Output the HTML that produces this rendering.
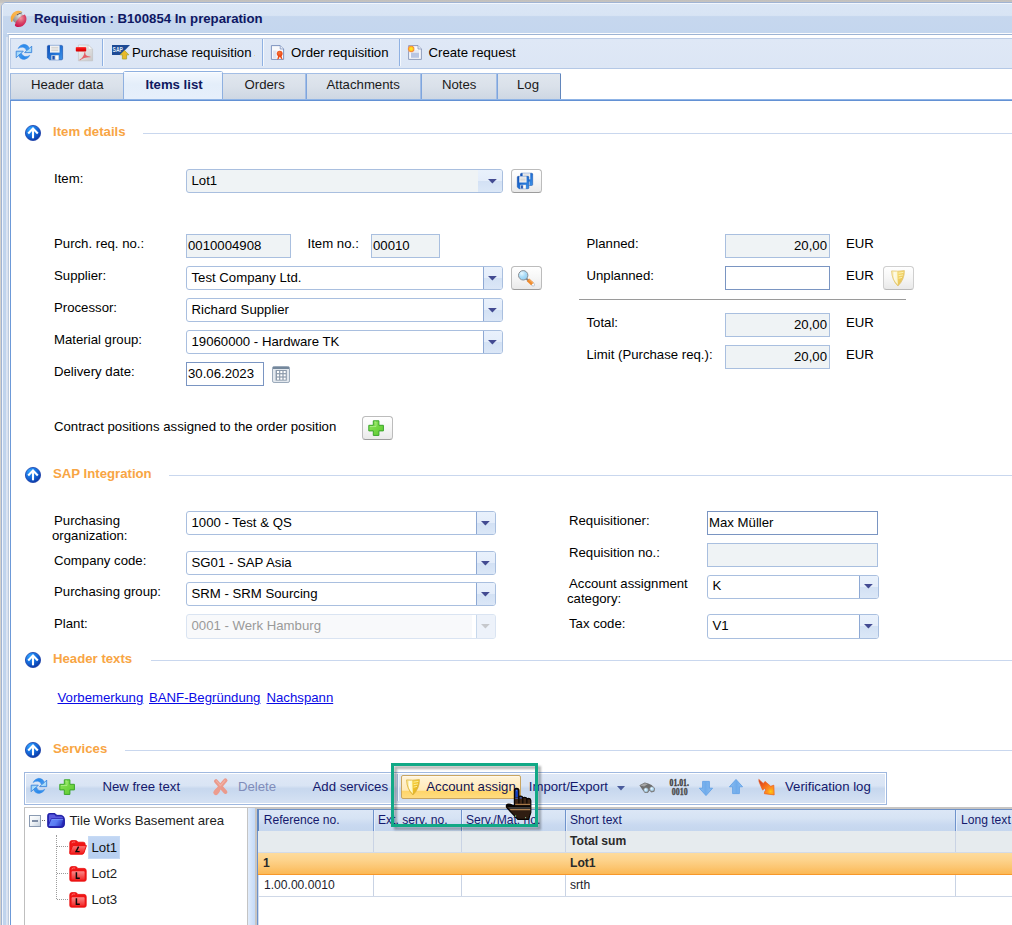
<!DOCTYPE html>
<html><head><meta charset="utf-8"><title>Requisition</title><style>
html,body{margin:0;padding:0;}
html{overflow:hidden;width:1012px;height:925px;}
body{width:1012px;height:925px;overflow:hidden;position:relative;background:#fff;font-family:"Liberation Sans",sans-serif;font-size:13.2px;color:#000;}
body div, body svg{position:absolute;}
.t{white-space:nowrap;color:#000;}
.lnk{color:#0a0ae6;text-decoration:underline;}
svg{display:block;overflow:visible}
</style></head><body>
<div style="left:0;top:0;width:1012px;height:925px;background:#d3d1cd"></div>
<div style="left:0;top:0;width:1012px;height:3px;background:linear-gradient(#c1bfbc,#c9c7c4)"></div>
<div style="left:1px;top:2px;width:1020px;height:930px;border:1px solid #9fb3d3;border-radius:5px 0 0 0;box-sizing:border-box;background:#c0d4ed;overflow:hidden"><div style="left:0;top:0;width:1020px;height:30px;background:linear-gradient(#dae6f5 0,#d8e4f4 38%,#c6d7ee 42%,#c4d6ee 100%);border-top:1px solid #f2f6fc;border-left:1px solid #eef3fb"></div><div style="left:0;top:31px;width:1px;height:900px;background:#f0f4fb"></div><div style="left:4px;top:34px;width:2px;height:900px;background:linear-gradient(90deg,#dde6f4,#d9e1ef)"></div></div>
<div style="left:10px;top:10px;width:17px;height:17px"><svg width="17" height="17" viewBox="0 0 17 17"><defs><linearGradient id="lg2" x1="0" y1="1" x2="1" y2="0"><stop offset="0" stop-color="#f7a22a"/><stop offset="0.6" stop-color="#fab650"/><stop offset="1" stop-color="#f5a63a"/></linearGradient><radialGradient id="lg3" cx="0.62" cy="0.3" r="0.7"><stop offset="0" stop-color="#e6e6e6"/><stop offset="0.45" stop-color="#b4b4b4"/><stop offset="1" stop-color="#8e8e8e"/></radialGradient><radialGradient id="lg4" cx="0.5" cy="0.3" r="0.75"><stop offset="0" stop-color="#ee9aa2"/><stop offset="0.5" stop-color="#d9486a"/><stop offset="1" stop-color="#cc0f4c"/></radialGradient></defs><circle cx="7.9" cy="7.8" r="5.7" fill="url(#lg3)"/><path d="M6.4 4.6 Q9.4 2.4 12.2 2.2 L12 3.2 Q9.4 3.6 7 5.4Z" fill="#3a3a3a" opacity=".75"/><path d="M1.2 11.7 Q-0.4 6.2 3.5 2.5 Q7.4 -0.8 12.3 1.9 Q7.2 2.8 4.5 6.8 Q2.8 9.4 2.3 11.7 Q1.7 12.2 1.2 11.7Z" fill="url(#lg2)"/><path d="M4.8 15 Q5.8 10.6 9.5 7.5 Q12.3 5.2 14.9 4.5 Q17.6 8.6 15.5 12.7 Q12.6 17.8 6.3 16.7 Q4.8 16.3 4.8 15Z" fill="url(#lg4)"/></svg></div>
<div class="t" style="left:34px;top:11.13px;font-size:13.2px;line-height:16px;font-weight:bold;color:#0f1763;">Requisition : B100854 In preparation</div>
<div class="" style="left:7px;top:33px;width:1010px;height:1px;background:#fbfcfe;"></div>
<div class="" style="left:8px;top:34px;width:1010px;height:900px;background:#fff;border:1px solid #bccadd;border-top-color:#9db4d4;box-sizing:border-box;"></div>
<div class="" style="left:10px;top:38px;width:1005px;height:31px;background:linear-gradient(#dfe8f6,#dce6f5);border:1px solid #bccce6;border-bottom-color:#b4c8e6;box-sizing:border-box;"></div>
<div style="left:15.9px;top:43.6px;width:16px;height:16px"><svg width="16" height="16" viewBox="0 0 16 16"><defs><linearGradient id="rg5" x1="0" y1="0" x2="1" y2="0.4"><stop offset="0" stop-color="#56a8f4"/><stop offset="0.5" stop-color="#2a88ea"/><stop offset="1" stop-color="#3f97ef"/></linearGradient><linearGradient id="rh6" x1="0" y1="0" x2="1" y2="1"><stop offset="0" stop-color="#7cc0f6"/><stop offset="0.6" stop-color="#aedffb"/><stop offset="1" stop-color="#8fcaf8"/></linearGradient></defs><path d="M2.0 4.6 Q3.4 1.2 7.6 0.35 Q11.8 0.3 13.4 4.3 L10.5 6.8 Q9.6 3.6 7.0 3.2 Q4.4 3.0 2.0 4.6Z" fill="url(#rg5)" stroke="#2d84e4" stroke-width="0.4"/><path d="M13.0 4.8 L15.7 2.1 L15.7 8.6 L8.6 8.6 L10.6 6.6Z" fill="url(#rh6)" stroke="#3b86dc" stroke-width="0.9" stroke-linejoin="round"/><g transform="rotate(180 7.95 7.9)"><path d="M2.0 4.6 Q3.4 1.2 7.6 0.35 Q11.8 0.3 13.4 4.3 L10.5 6.8 Q9.6 3.6 7.0 3.2 Q4.4 3.0 2.0 4.6Z" fill="url(#rg5)" stroke="#2d84e4" stroke-width="0.4"/><path d="M13.0 4.8 L15.7 2.1 L15.7 8.6 L8.6 8.6 L10.6 6.6Z" fill="url(#rh6)" stroke="#3b86dc" stroke-width="0.9" stroke-linejoin="round"/></g></svg></div>
<div style="left:46px;top:44px;width:17px;height:17px"><svg width="17" height="17" viewBox="0 0 17 17"><defs><linearGradient id="sg7" x1="0" y1="0" x2="1" y2="1"><stop offset="0" stop-color="#0e4db4"/><stop offset="0.55" stop-color="#2273d6"/><stop offset="1" stop-color="#3f93e8"/></linearGradient></defs><g transform="translate(1,1)"><path d="M1.6 0.4H14.4Q15.6 0.4 15.6 1.6V13.6Q15.6 14.8 14.4 14.8H2.6L0.4 12.8V1.6Q0.4 0.4 1.6 0.4Z" fill="url(#sg7)" stroke="#0f4aa8" stroke-width="0.6"/><rect x="3" y="0.4" width="9.6" height="7.2" fill="#f4f4f4"/><path d="M4.3 2.4H11.3M4.3 4H11.3M4.3 5.6H11.3" stroke="#c9c9c9" stroke-width="0.8"/><rect x="4.3" y="10.2" width="7.6" height="4.6" fill="#d6dbe2"/><rect x="5.4" y="10.9" width="2.3" height="3.6" fill="#1a4fb0"/><rect x="8.8" y="10.7" width="2.2" height="3.8" fill="#fdfdfd"/></g></svg></div>
<div style="left:75px;top:44px;width:18px;height:18px"><svg width="18" height="18" viewBox="0 0 18 18"><defs><linearGradient id="pg9" x1="0" y1="0" x2="1" y2="1"><stop offset="0" stop-color="#f6f6f6"/><stop offset="1" stop-color="#c9c9c9"/></linearGradient><linearGradient id="pr10" x1="0" y1="0" x2="0" y2="1"><stop offset="0" stop-color="#ff4a4a"/><stop offset="0.4" stop-color="#ee0a0a"/><stop offset="1" stop-color="#d40000"/></linearGradient></defs><path d="M3.4 1H13.2L17.6 5.2V16.8H3.4Z" fill="url(#pg9)" stroke="#bdbdbd" stroke-width="0.6"/><path d="M13.2 1V5.2H17.6Z" fill="#fbfbfb" stroke="#c4c4c4" stroke-width="0.5"/><path d="M4.8 15.6C7.6 14.2 9 11.6 9.4 8.6C9.5 7.6 10.4 7.7 10.3 8.8C10.1 11 11.6 12.6 15 12.4C15.9 12.4 15.8 13.3 14.9 13.3C11.2 13.1 7.6 14.2 5.2 16.2C4.5 16.7 4.1 16 4.8 15.6Z" fill="#e6525a" opacity=".9"/><rect x="0.8" y="3" width="10.4" height="4.5" rx="0.8" fill="url(#pr10)"/></svg></div>
<div class="" style="left:102px;top:39px;width:1px;height:27px;background:#8fb1e2;"></div>
<div class="" style="left:103px;top:39px;width:1px;height:27px;background:#f4f8fd;"></div>
<div style="left:111px;top:44px;width:19px;height:16px"><svg width="19" height="16" viewBox="0 0 19 16"><defs></defs><path d="M1 1H19L9.4 11H1Z" fill="#1d4a95"/><text x="1.6" y="7.6" font-family="Liberation Sans" font-weight="bold" font-size="6.6" fill="#dfe7f4" textLength="10.4" lengthAdjust="spacingAndGlyphs">SAP</text><path d="M13.5 6.4L17.9 10.8H15.6V15H11.4V10.8H9.1Z" fill="#e9b928" stroke="#a9a32c" stroke-width="0.8" stroke-linejoin="round"/></svg></div>
<div class="t" style="left:132px;top:45.33px;font-size:13.2px;line-height:16px;">Purchase requisition</div>
<div class="" style="left:253.6px;top:54.6px;width:1.6px;height:1.8px;background:#e9c46a;opacity:.8;border-radius:1px;"></div>
<div class="" style="left:262px;top:39px;width:1px;height:27px;background:#8fb1e2;"></div>
<div class="" style="left:263px;top:39px;width:1px;height:27px;background:#f4f8fd;"></div>
<div style="left:270px;top:44px;width:16px;height:17px"><svg width="16" height="17" viewBox="0 0 16 17"><defs><radialGradient id="og11" cx="0.45" cy="0.4" r="0.65"><stop offset="0" stop-color="#f77a3a"/><stop offset="1" stop-color="#e53a0e"/></radialGradient></defs><path d="M1.4 1.6H10.2L13.6 5V15.4H1.4Z" fill="#f8f9fc" stroke="#7289b9" stroke-width="0.9"/><path d="M10.2 1.6V5H13.6" fill="#e6ebf5" stroke="#7289b9" stroke-width="0.7"/><rect x="3" y="6.5" width="3.4" height="7.6" fill="#d9e0ef" opacity=".8"/><path d="M7.2 15.8L8.3 10.8H11.2L12.6 15.8L10.9 14.6L9.8 12.6L8.8 14.7Z" fill="#ee4a14"/><circle cx="9.7" cy="9.6" r="2.9" fill="url(#og11)"/></svg></div>
<div class="t" style="left:291px;top:45.33px;font-size:13.2px;line-height:16px;">Order requisition</div>
<div class="" style="left:399px;top:39px;width:1px;height:27px;background:#8fb1e2;"></div>
<div class="" style="left:400px;top:39px;width:1px;height:27px;background:#f4f8fd;"></div>
<div style="left:406.8px;top:44px;width:16px;height:17px"><svg width="16" height="17" viewBox="0 0 16 17"><defs><radialGradient id="cg12" cx="0.5" cy="0.5" r="0.5"><stop offset="0" stop-color="#fff02a"/><stop offset="0.45" stop-color="#ffd21e"/><stop offset="0.8" stop-color="#f58a3c"/><stop offset="1" stop-color="#f4a27a" stop-opacity=".6"/></radialGradient></defs><path d="M1.6 1.6H11L14.4 5V15.4H1.6Z" fill="#f6f7fb" stroke="#8493b4" stroke-width="0.9"/><path d="M11 1.6V5H14.4" fill="#e3e8f3" stroke="#8493b4" stroke-width="0.7"/><rect x="4" y="8.6" width="8" height="5.2" fill="#b9c6e3"/><rect x="4" y="6" width="8" height="2.2" fill="#e7ebf5"/><circle cx="4.2" cy="4.9" r="3.5" fill="url(#cg12)"/></svg></div>
<div class="t" style="left:428.5px;top:45.33px;font-size:13.2px;line-height:16px;">Create request</div>
<div class="" style="left:10px;top:73px;width:1005px;height:27px;background:#fff;"></div>
<div class="" style="left:10px;top:99px;width:1005px;height:1px;background:#8fb4e6;"></div>
<div class="" style="left:10px;top:100px;width:1005px;height:1px;background:#6391d4;"></div>
<div class="" style="left:10px;top:73px;width:114px;height:26px;box-sizing:border-box;border-top:1px solid #a3bee5;background:linear-gradient(#e0e6ee 0,#dae1ea 50%,#ced7e3 100%);"></div>
<div class="" style="left:10px;top:74px;width:1px;height:25px;background:#7ea5dd;"></div>
<div class="" style="left:123px;top:74px;width:1px;height:25px;background:#a2bde6;"></div>
<div class="" style="left:10px;top:74px;width:1px;height:25px;background:#9db6da;"></div>
<div class="" style="left:222px;top:73px;width:84px;height:26px;box-sizing:border-box;border-top:1px solid #a3bee5;background:linear-gradient(#e0e6ee 0,#dae1ea 50%,#ced7e3 100%);"></div>
<div class="" style="left:222px;top:74px;width:1px;height:25px;background:#7ea5dd;"></div>
<div class="" style="left:305px;top:74px;width:1px;height:25px;background:#a2bde6;"></div>
<div class="" style="left:306px;top:73px;width:115px;height:26px;box-sizing:border-box;border-top:1px solid #a3bee5;background:linear-gradient(#e0e6ee 0,#dae1ea 50%,#ced7e3 100%);"></div>
<div class="" style="left:306px;top:74px;width:1px;height:25px;background:#7ea5dd;"></div>
<div class="" style="left:420px;top:74px;width:1px;height:25px;background:#a2bde6;"></div>
<div class="" style="left:421px;top:73px;width:76px;height:26px;box-sizing:border-box;border-top:1px solid #a3bee5;background:linear-gradient(#e0e6ee 0,#dae1ea 50%,#ced7e3 100%);"></div>
<div class="" style="left:421px;top:74px;width:1px;height:25px;background:#7ea5dd;"></div>
<div class="" style="left:496px;top:74px;width:1px;height:25px;background:#a2bde6;"></div>
<div class="" style="left:497px;top:73px;width:64px;height:26px;box-sizing:border-box;border-top:1px solid #a3bee5;background:linear-gradient(#e0e6ee 0,#dae1ea 50%,#ced7e3 100%);"></div>
<div class="" style="left:497px;top:74px;width:1px;height:25px;background:#7ea5dd;"></div>
<div class="" style="left:560px;top:74px;width:1px;height:25px;background:#a2bde6;"></div>
<div class="" style="left:560px;top:74px;width:1px;height:25px;background:#6286bc;"></div>
<div class="" style="left:123px;top:71px;width:100px;height:28px;box-sizing:border-box;border:1px solid #8eb0e0;border-bottom:none;border-radius:3px 3px 0 0;background:linear-gradient(#f3f8fe 0,#e4eefa 45%,#e6effb 100%);"></div>
<div class="" style="left:124px;top:72px;width:98px;height:1px;background:#fbfdff;"></div>
<div class="t" style="left:31px;top:76.83px;font-size:13.2px;line-height:16px;color:#1a1a1a">Header data</div>
<div class="t" style="left:145.5px;top:76.83px;font-size:13.2px;line-height:16px;font-weight:bold;color:#10195f">Items list</div>
<div class="t" style="left:244.5px;top:76.83px;font-size:13.2px;line-height:16px;color:#1a1a1a">Orders</div>
<div class="t" style="left:326.5px;top:76.83px;font-size:13.2px;line-height:16px;color:#1a1a1a">Attachments</div>
<div class="t" style="left:442px;top:76.83px;font-size:13.2px;line-height:16px;color:#1a1a1a">Notes</div>
<div class="t" style="left:517px;top:76.83px;font-size:13.2px;line-height:16px;color:#1a1a1a">Log</div>
<div class="" style="left:10px;top:101px;width:1px;height:830px;background:#6c99d8;"></div>
<div style="left:25px;top:125px;width:16px;height:16px"><svg width="16" height="16" viewBox="0 0 16 16"><defs><radialGradient id="cg1" cx="0.3" cy="0.22" r="0.9"><stop offset="0" stop-color="#2da0ff"/><stop offset="0.55" stop-color="#1468d8"/><stop offset="1" stop-color="#0b2f9a"/></radialGradient></defs><circle cx="8" cy="8" r="7.6" fill="url(#cg1)" stroke="#1b3fa8" stroke-width="0.8"/><path d="M3.2 8.6L8 3.6L12.8 8.6" fill="none" stroke="#fff" stroke-width="2.1" stroke-linejoin="miter"/><path d="M8 5V13.3" stroke="#fff" stroke-width="2.1" fill="none"/></svg></div>
<div class="t" style="left:53px;top:124.33px;font-size:13.2px;line-height:16px;font-weight:bold;color:#f8a544;">Item details</div>
<div class="" style="left:143px;top:133px;width:869px;height:1px;background:#c9d7ee;"></div>
<div class="t" style="left:54px;top:171.33px;font-size:13.2px;line-height:16px;">Item:</div>
<div class="" style="left:186px;top:169px;width:317px;height:24px;background:#eff3f5;border:1px solid #a9bfdf;box-sizing:border-box;border-radius:3px;overflow:hidden;"><div style="position:absolute;right:0;top:0;width:24px;height:100%;background:linear-gradient(#e9f1fc 0,#e4edfa 49%,#d3e1f4 50%,#dbe7f7 100%);"></div><svg style="position:absolute;right:5.2px;top:8.8px" width="8.8" height="4.5" viewBox="0 0 8.8 4.5"><path d="M0 0H8.8L4.4 4.5Z" fill="#434b92"/></svg></div>
<div class="t" style="left:191.5px;top:171.8px;font-size:13.2px;line-height:17px;color:#000">Lot1</div>
<div class="" style="left:511px;top:169px;width:31px;height:24px;border:1px solid #bcbcbc;border-bottom-color:#9c9c9c;border-radius:3.5px;box-sizing:border-box;background:linear-gradient(#ffffff 0,#f6f6f6 50%,#e9e9e9 100%);"><div style="left:3.6px;top:1.7px;width:18px;height:18px"><svg width="18" height="18" viewBox="0 0 18 18"><defs><linearGradient id="sg8" x1="0" y1="0" x2="1" y2="1"><stop offset="0" stop-color="#0e4db4"/><stop offset="0.55" stop-color="#2273d6"/><stop offset="1" stop-color="#3f93e8"/></linearGradient></defs><g transform="translate(4.2,0.9) scale(0.8,0.85)"><path d="M1.6 0.4H14.4Q15.6 0.4 15.6 1.6V13.6Q15.6 14.8 14.4 14.8H2.6L0.4 12.8V1.6Q0.4 0.4 1.6 0.4Z" fill="url(#sg8)" stroke="#0f4aa8" stroke-width="0.6"/><rect x="3" y="0.4" width="9.6" height="7.2" fill="#f4f4f4"/><path d="M4.3 2.4H11.3M4.3 4H11.3M4.3 5.6H11.3" stroke="#c9c9c9" stroke-width="0.8"/><rect x="4.3" y="10.2" width="7.6" height="4.6" fill="#d6dbe2"/><rect x="5.4" y="10.9" width="2.3" height="3.6" fill="#1a4fb0"/><rect x="8.8" y="10.7" width="2.2" height="3.8" fill="#fdfdfd"/></g><g transform="translate(1,4) scale(0.76,0.86)"><path d="M1.6 0.4H14.4Q15.6 0.4 15.6 1.6V13.6Q15.6 14.8 14.4 14.8H2.6L0.4 12.8V1.6Q0.4 0.4 1.6 0.4Z" fill="url(#sg8)" stroke="#0f4aa8" stroke-width="0.6"/><rect x="3" y="0.4" width="9.6" height="7.2" fill="#f4f4f4"/><path d="M4.3 2.4H11.3M4.3 4H11.3M4.3 5.6H11.3" stroke="#c9c9c9" stroke-width="0.8"/><rect x="4.3" y="10.2" width="7.6" height="4.6" fill="#d6dbe2"/><rect x="5.4" y="10.9" width="2.3" height="3.6" fill="#1a4fb0"/><rect x="8.8" y="10.7" width="2.2" height="3.8" fill="#fdfdfd"/></g></svg></div></div>
<div class="t" style="left:54px;top:236.33px;font-size:13.2px;line-height:16px;">Purch. req. no.:</div>
<div class="" style="left:186px;top:234px;width:105px;height:24px;background:#eff3f5;border:1px solid #a9bfdf;box-sizing:border-box;"></div>
<div class="t" style="left:188px;top:236.9px;font-size:13.2px;line-height:17px;">0010004908</div>
<div class="t" style="left:307.5px;top:236.33px;font-size:13.2px;line-height:16px;">Item no.:</div>
<div class="" style="left:371px;top:234px;width:69px;height:24px;background:#eff3f5;border:1px solid #a9bfdf;box-sizing:border-box;"></div>
<div class="t" style="left:373px;top:236.9px;font-size:13.2px;line-height:17px;">00010</div>
<div class="t" style="left:54px;top:268.33px;font-size:13.2px;line-height:16px;">Supplier:</div>
<div class="" style="left:186px;top:266px;width:317px;height:24px;background:#fff;border:1px solid #a9bfdf;box-sizing:border-box;border-radius:3px;overflow:hidden;"><div style="position:absolute;right:0;top:0;width:18px;height:100%;background:linear-gradient(#e9f1fc 0,#e4edfa 49%,#d3e1f4 50%,#dbe7f7 100%);border-left:1px solid #8ea9d4;"></div><svg style="position:absolute;right:5.2px;top:8.8px" width="8.8" height="4.5" viewBox="0 0 8.8 4.5"><path d="M0 0H8.8L4.4 4.5Z" fill="#434b92"/></svg></div>
<div class="t" style="left:191.5px;top:268.8px;font-size:13.2px;line-height:17px;color:#000">Test Company Ltd.</div>
<div class="" style="left:511px;top:266px;width:31px;height:24px;border:1px solid #bcbcbc;border-bottom-color:#9c9c9c;border-radius:3.5px;box-sizing:border-box;background:linear-gradient(#ffffff 0,#f6f6f6 50%,#e9e9e9 100%);"><div style="left:-1px;top:-1px;width:31px;height:24px"><svg width="31" height="24" viewBox="0 0 31 24"><defs><radialGradient id="mg13" cx="0.35" cy="0.3" r="0.8"><stop offset="0" stop-color="#e9f8ff"/><stop offset="0.5" stop-color="#a9dcf8"/><stop offset="1" stop-color="#8fcdf3"/></radialGradient></defs><path d="M15.2 12.4L17.4 14.4" stroke="#7d8288" stroke-width="2" stroke-linecap="round"/><path d="M21 17.6L22.2 18.7" stroke="#c3cad4" stroke-width="3.6" stroke-linecap="round"/><path d="M21.6 18.2L22.2 18.7" stroke="#ffffff" stroke-width="1.6" stroke-linecap="round"/><path d="M17 13.9L21.4 17.9" stroke="#f08a2c" stroke-width="3.6" stroke-linecap="butt"/><path d="M17.8 13.4L22 17.2" stroke="#f8b56a" stroke-width="1"/><circle cx="12.2" cy="9.3" r="4.7" fill="url(#mg13)" stroke="#8b8f94" stroke-width="1"/></svg></div></div>
<div class="t" style="left:54px;top:300.33px;font-size:13.2px;line-height:16px;">Processor:</div>
<div class="" style="left:186px;top:298px;width:317px;height:24px;background:#fff;border:1px solid #a9bfdf;box-sizing:border-box;border-radius:3px;overflow:hidden;"><div style="position:absolute;right:0;top:0;width:18px;height:100%;background:linear-gradient(#e9f1fc 0,#e4edfa 49%,#d3e1f4 50%,#dbe7f7 100%);border-left:1px solid #8ea9d4;"></div><svg style="position:absolute;right:5.2px;top:8.8px" width="8.8" height="4.5" viewBox="0 0 8.8 4.5"><path d="M0 0H8.8L4.4 4.5Z" fill="#434b92"/></svg></div>
<div class="t" style="left:191.5px;top:300.8px;font-size:13.2px;line-height:17px;color:#000">Richard Supplier</div>
<div class="t" style="left:54px;top:332.33px;font-size:13.2px;line-height:16px;">Material group:</div>
<div class="" style="left:186px;top:330px;width:317px;height:24px;background:#fff;border:1px solid #a9bfdf;box-sizing:border-box;border-radius:3px;overflow:hidden;"><div style="position:absolute;right:0;top:0;width:18px;height:100%;background:linear-gradient(#e9f1fc 0,#e4edfa 49%,#d3e1f4 50%,#dbe7f7 100%);border-left:1px solid #8ea9d4;"></div><svg style="position:absolute;right:5.2px;top:8.8px" width="8.8" height="4.5" viewBox="0 0 8.8 4.5"><path d="M0 0H8.8L4.4 4.5Z" fill="#434b92"/></svg></div>
<div class="t" style="left:191.5px;top:332.8px;font-size:13.2px;line-height:17px;color:#000">19060000 - Hardware TK</div>
<div class="t" style="left:54px;top:364.33px;font-size:13.2px;line-height:16px;">Delivery date:</div>
<div class="" style="left:186px;top:362px;width:78px;height:24px;background:#fff;border:1px solid #7a95c2;box-sizing:border-box;"></div>
<div class="t" style="left:188px;top:364.9px;font-size:13.2px;line-height:17px;">30.06.2023</div>
<div style="left:272px;top:366px;width:18px;height:17px"><svg width="18" height="17" viewBox="0 0 18 17"><defs></defs><rect x="0.5" y="0.5" width="17" height="16" rx="1.6" fill="#e3e8ee" stroke="#9aa9ba" stroke-width="1"/><rect x="1" y="1" width="16" height="2" fill="#74879b"/><rect x="3.6" y="4" width="11.2" height="10.6" fill="#8c9aab"/><rect x="5.0" y="5.0" width="2.1" height="2.1" fill="#fff"/><rect x="5.0" y="8.3" width="2.1" height="2.1" fill="#fff"/><rect x="5.0" y="11.6" width="2.1" height="2.1" fill="#fff"/><rect x="8.3" y="5.0" width="2.1" height="2.1" fill="#fff"/><rect x="8.3" y="8.3" width="2.1" height="2.1" fill="#fff"/><rect x="8.3" y="11.6" width="2.1" height="2.1" fill="#fff"/><rect x="11.6" y="5.0" width="2.1" height="2.1" fill="#fff"/><rect x="11.6" y="8.3" width="2.1" height="2.1" fill="#fff"/><rect x="11.6" y="11.6" width="2.1" height="2.1" fill="#fff"/></svg></div>
<div class="t" style="left:54px;top:419.33px;font-size:13.2px;line-height:16px;">Contract positions assigned to the order position</div>
<div class="" style="left:362px;top:416px;width:31px;height:24px;border:1px solid #bcbcbc;border-bottom-color:#9c9c9c;border-radius:3.5px;box-sizing:border-box;background:linear-gradient(#ffffff 0,#f6f6f6 50%,#e9e9e9 100%);"><div style="left:4.7px;top:2.7px;width:17px;height:17px"><svg width="17" height="17" viewBox="0 0 17 17"><defs><linearGradient id="pl14" x1="0" y1="0" x2="1" y2="1"><stop offset="0" stop-color="#92e665"/><stop offset="0.5" stop-color="#74d743"/><stop offset="1" stop-color="#5cc832"/></linearGradient></defs><path d="M5.3 0.8H10.9V5.3H15.4V10.9H10.9V15.4H5.3V10.9H0.8V5.3H5.3Z" fill="url(#pl14)" stroke="#3aa52a" stroke-width="1" stroke-linejoin="round"/><path d="M6.5 2H8V6.5H2" fill="none" stroke="#b5f08f" stroke-width="0.9" opacity=".8"/></svg></div></div>
<div class="t" style="left:586.5px;top:236.33px;font-size:13.2px;line-height:16px;">Planned:</div>
<div class="" style="left:725px;top:234px;width:105px;height:24px;background:#eff3f5;border:1px solid #a9bfdf;box-sizing:border-box;"></div>
<div class="t" style="left:725px;width:102px;text-align:right;top:236.9px;font-size:13.2px;line-height:17px;">20,00</div>
<div class="t" style="left:846px;top:236.33px;font-size:13.2px;line-height:16px;">EUR</div>
<div class="t" style="left:586.5px;top:268.33px;font-size:13.2px;line-height:16px;">Unplanned:</div>
<div class="" style="left:725px;top:266px;width:105px;height:24px;background:#fff;border:1px solid #7a95c2;box-sizing:border-box;"></div>
<div class="t" style="left:846px;top:268.33px;font-size:13.2px;line-height:16px;">EUR</div>
<div class="" style="left:883px;top:266px;width:31px;height:24px;border:1px solid #cfcfcf;border-bottom-color:#b9b9b9;border-radius:3.5px;box-sizing:border-box;background:linear-gradient(#ffffff 0,#f6f6f6 50%,#e9e9e9 100%);"><div style="left:6.5px;top:3.3px;width:16px;height:17px;opacity:.72"><svg width="16" height="17" viewBox="0 0 16 17"><defs><linearGradient id="sh15" x1="0" y1="0" x2="1" y2="0"><stop offset="0" stop-color="#f6df86"/><stop offset="0.4" stop-color="#fffbe0"/><stop offset="1" stop-color="#fff6b8"/></linearGradient><linearGradient id="sh16" x1="0" y1="0" x2="1" y2="1"><stop offset="0" stop-color="#f8e27a"/><stop offset="0.45" stop-color="#f2c832"/><stop offset="1" stop-color="#d9a214"/></linearGradient></defs><path d="M0.6 0.9Q6.6 1.6 13.4 0.6Q13.6 9.5 6.9 16Q0.8 10 0.6 0.9Z" fill="url(#sh16)" stroke="#d9b344" stroke-width="0.8"/><path d="M1.2 1.5Q4 1.8 6.2 1.6L6.9 15Q1.6 9.6 1.2 1.5Z" fill="url(#sh15)"/><path d="M7.6 3.2L12.4 2.4M7.6 5.7L12 4.9M7.6 8.2L11 7.4" stroke="#fff1a0" stroke-width="1" opacity=".9"/></svg></div></div>
<div class="" style="left:579px;top:299px;width:327px;height:1px;background:#9a9a9a;"></div>
<div class="t" style="left:586.5px;top:315.33px;font-size:13.2px;line-height:16px;">Total:</div>
<div class="" style="left:725px;top:313px;width:105px;height:24px;background:#eff3f5;border:1px solid #a9bfdf;box-sizing:border-box;"></div>
<div class="t" style="left:725px;width:102px;text-align:right;top:315.9px;font-size:13.2px;line-height:17px;">20,00</div>
<div class="t" style="left:846px;top:315.33px;font-size:13.2px;line-height:16px;">EUR</div>
<div class="t" style="left:586.5px;top:347.33px;font-size:13.2px;line-height:16px;">Limit (Purchase req.):</div>
<div class="" style="left:725px;top:345px;width:105px;height:24px;background:#eff3f5;border:1px solid #a9bfdf;box-sizing:border-box;"></div>
<div class="t" style="left:725px;width:102px;text-align:right;top:347.9px;font-size:13.2px;line-height:17px;">20,00</div>
<div class="t" style="left:846px;top:347.33px;font-size:13.2px;line-height:16px;">EUR</div>
<div style="left:25px;top:467px;width:16px;height:16px"><svg width="16" height="16" viewBox="0 0 16 16"><defs><radialGradient id="cg1" cx="0.3" cy="0.22" r="0.9"><stop offset="0" stop-color="#2da0ff"/><stop offset="0.55" stop-color="#1468d8"/><stop offset="1" stop-color="#0b2f9a"/></radialGradient></defs><circle cx="8" cy="8" r="7.6" fill="url(#cg1)" stroke="#1b3fa8" stroke-width="0.8"/><path d="M3.2 8.6L8 3.6L12.8 8.6" fill="none" stroke="#fff" stroke-width="2.1" stroke-linejoin="miter"/><path d="M8 5V13.3" stroke="#fff" stroke-width="2.1" fill="none"/></svg></div>
<div class="t" style="left:53px;top:466.33px;font-size:13.2px;line-height:16px;font-weight:bold;color:#f8a544;">SAP Integration</div>
<div class="" style="left:169px;top:475px;width:843px;height:1px;background:#c9d7ee;"></div>
<div class="t" style="left:54px;top:513.33px;font-size:13.2px;line-height:16px;">Purchasing</div>
<div class="t" style="left:52px;top:528.33px;font-size:13.2px;line-height:16px;">organization:</div>
<div class="" style="left:186px;top:511px;width:310px;height:24px;background:#fff;border:1px solid #a9bfdf;box-sizing:border-box;border-radius:3px;overflow:hidden;"><div style="position:absolute;right:0;top:0;width:18px;height:100%;background:linear-gradient(#e9f1fc 0,#e4edfa 49%,#d3e1f4 50%,#dbe7f7 100%);border-left:1px solid #8ea9d4;"></div><svg style="position:absolute;right:5.2px;top:8.8px" width="8.8" height="4.5" viewBox="0 0 8.8 4.5"><path d="M0 0H8.8L4.4 4.5Z" fill="#434b92"/></svg></div>
<div class="t" style="left:191.5px;top:513.8px;font-size:13.2px;line-height:17px;color:#000">1000 - Test &amp; QS</div>
<div class="t" style="left:54px;top:553.33px;font-size:13.2px;line-height:16px;">Company code:</div>
<div class="" style="left:186px;top:551px;width:310px;height:24px;background:#fff;border:1px solid #a9bfdf;box-sizing:border-box;border-radius:3px;overflow:hidden;"><div style="position:absolute;right:0;top:0;width:18px;height:100%;background:linear-gradient(#e9f1fc 0,#e4edfa 49%,#d3e1f4 50%,#dbe7f7 100%);border-left:1px solid #8ea9d4;"></div><svg style="position:absolute;right:5.2px;top:8.8px" width="8.8" height="4.5" viewBox="0 0 8.8 4.5"><path d="M0 0H8.8L4.4 4.5Z" fill="#434b92"/></svg></div>
<div class="t" style="left:191.5px;top:553.8px;font-size:13.2px;line-height:17px;color:#000">SG01 - SAP Asia</div>
<div class="t" style="left:54px;top:584.33px;font-size:13.2px;line-height:16px;">Purchasing group:</div>
<div class="" style="left:186px;top:582.3px;width:310px;height:24px;background:#fff;border:1px solid #a9bfdf;box-sizing:border-box;border-radius:3px;overflow:hidden;"><div style="position:absolute;right:0;top:0;width:18px;height:100%;background:linear-gradient(#e9f1fc 0,#e4edfa 49%,#d3e1f4 50%,#dbe7f7 100%);border-left:1px solid #8ea9d4;"></div><svg style="position:absolute;right:5.2px;top:8.8px" width="8.8" height="4.5" viewBox="0 0 8.8 4.5"><path d="M0 0H8.8L4.4 4.5Z" fill="#434b92"/></svg></div>
<div class="t" style="left:191.5px;top:585.0999999999999px;font-size:13.2px;line-height:17px;color:#000">SRM - SRM Sourcing</div>
<div class="t" style="left:54px;top:615.83px;font-size:13.2px;line-height:16px;">Plant:</div>
<div class="" style="left:186px;top:614px;width:310px;height:24.5px;background:#f8f9fb;border:1px solid #dae4f2;box-sizing:border-box;border-radius:3px;overflow:hidden;"><div style="position:absolute;right:19px;top:0;width:4px;height:100%;background:#fff"></div><div style="position:absolute;right:0;top:0;width:18px;height:100%;background:#edf2fa;border-left:1px solid #c7d8ec;"></div><svg style="position:absolute;right:5.2px;top:9.05px" width="8.8" height="4.5" viewBox="0 0 8.8 4.5"><path d="M0 0H8.8L4.4 4.5Z" fill="#c6c8cc"/></svg></div>
<div class="t" style="left:191.5px;top:616.8px;font-size:13.2px;line-height:17px;color:#9a9a9a">0001 - Werk Hamburg</div>
<div class="t" style="left:569px;top:513.33px;font-size:13.2px;line-height:16px;">Requisitioner:</div>
<div class="" style="left:707px;top:511px;width:171px;height:24px;background:#fff;border:1px solid #7a95c2;box-sizing:border-box;"></div>
<div class="t" style="left:709px;top:513.9px;font-size:13.2px;line-height:17px;">Max Müller</div>
<div class="t" style="left:569px;top:545.33px;font-size:13.2px;line-height:16px;">Requisition no.:</div>
<div class="" style="left:707px;top:543px;width:171px;height:24px;background:#eff3f5;border:1px solid #a9bfdf;box-sizing:border-box;"></div>
<div class="t" style="left:569px;top:576.33px;font-size:13.2px;line-height:16px;">Account assignment</div>
<div class="t" style="left:567px;top:591.33px;font-size:13.2px;line-height:16px;">category:</div>
<div class="" style="left:707px;top:574.5px;width:172px;height:24px;background:#fff;border:1px solid #a9bfdf;box-sizing:border-box;border-radius:3px;overflow:hidden;"><div style="position:absolute;right:0;top:0;width:18px;height:100%;background:linear-gradient(#e9f1fc 0,#e4edfa 49%,#d3e1f4 50%,#dbe7f7 100%);border-left:1px solid #8ea9d4;"></div><svg style="position:absolute;right:5.2px;top:8.8px" width="8.8" height="4.5" viewBox="0 0 8.8 4.5"><path d="M0 0H8.8L4.4 4.5Z" fill="#434b92"/></svg></div>
<div class="t" style="left:712.5px;top:577.3px;font-size:13.2px;line-height:17px;color:#000">K</div>
<div class="t" style="left:569px;top:616.33px;font-size:13.2px;line-height:16px;">Tax code:</div>
<div class="" style="left:707px;top:614px;width:172px;height:24.5px;background:#fff;border:1px solid #a9bfdf;box-sizing:border-box;border-radius:3px;overflow:hidden;"><div style="position:absolute;right:0;top:0;width:18px;height:100%;background:linear-gradient(#e9f1fc 0,#e4edfa 49%,#d3e1f4 50%,#dbe7f7 100%);border-left:1px solid #8ea9d4;"></div><svg style="position:absolute;right:5.2px;top:9.05px" width="8.8" height="4.5" viewBox="0 0 8.8 4.5"><path d="M0 0H8.8L4.4 4.5Z" fill="#434b92"/></svg></div>
<div class="t" style="left:712.5px;top:616.8px;font-size:13.2px;line-height:17px;color:#000">V1</div>
<div style="left:25px;top:652px;width:16px;height:16px"><svg width="16" height="16" viewBox="0 0 16 16"><defs><radialGradient id="cg1" cx="0.3" cy="0.22" r="0.9"><stop offset="0" stop-color="#2da0ff"/><stop offset="0.55" stop-color="#1468d8"/><stop offset="1" stop-color="#0b2f9a"/></radialGradient></defs><circle cx="8" cy="8" r="7.6" fill="url(#cg1)" stroke="#1b3fa8" stroke-width="0.8"/><path d="M3.2 8.6L8 3.6L12.8 8.6" fill="none" stroke="#fff" stroke-width="2.1" stroke-linejoin="miter"/><path d="M8 5V13.3" stroke="#fff" stroke-width="2.1" fill="none"/></svg></div>
<div class="t" style="left:53px;top:651.33px;font-size:13.2px;line-height:16px;font-weight:bold;color:#f8a544;">Header texts</div>
<div class="" style="left:151px;top:660px;width:861px;height:1px;background:#c9d7ee;"></div>
<div class="t" style="left:57.5px;top:690.33px;font-size:13.2px;line-height:16px;"><span class="lnk">Vorbemerkung</span></div>
<div class="t" style="left:149px;top:690.33px;font-size:13.2px;line-height:16px;"><span class="lnk">BANF-Begründung</span></div>
<div class="t" style="left:266.5px;top:690.33px;font-size:13.2px;line-height:16px;"><span class="lnk">Nachspann</span></div>
<div style="left:25px;top:742px;width:16px;height:16px"><svg width="16" height="16" viewBox="0 0 16 16"><defs><radialGradient id="cg1" cx="0.3" cy="0.22" r="0.9"><stop offset="0" stop-color="#2da0ff"/><stop offset="0.55" stop-color="#1468d8"/><stop offset="1" stop-color="#0b2f9a"/></radialGradient></defs><circle cx="8" cy="8" r="7.6" fill="url(#cg1)" stroke="#1b3fa8" stroke-width="0.8"/><path d="M3.2 8.6L8 3.6L12.8 8.6" fill="none" stroke="#fff" stroke-width="2.1" stroke-linejoin="miter"/><path d="M8 5V13.3" stroke="#fff" stroke-width="2.1" fill="none"/></svg></div>
<div class="t" style="left:53px;top:741.33px;font-size:13.2px;line-height:16px;font-weight:bold;color:#f8a544;">Services</div>
<div class="" style="left:125px;top:750px;width:887px;height:1px;background:#c9d7ee;"></div>
<div class="" style="left:24px;top:772px;width:863px;height:33px;box-sizing:border-box;border:1px solid #9fb8df;background:#fff;"></div>
<div class="" style="left:26px;top:774px;width:859px;height:29px;background:linear-gradient(#dfe8f6 0,#d9e4f4 40%,#c8d8ee 50%,#c9d9ef 60%,#d6e2f3 100%);"></div>
<div style="left:31px;top:777.8px;width:16px;height:16px"><svg width="16" height="16" viewBox="0 0 16 16"><defs><linearGradient id="rg5" x1="0" y1="0" x2="1" y2="0.4"><stop offset="0" stop-color="#56a8f4"/><stop offset="0.5" stop-color="#2a88ea"/><stop offset="1" stop-color="#3f97ef"/></linearGradient><linearGradient id="rh6" x1="0" y1="0" x2="1" y2="1"><stop offset="0" stop-color="#7cc0f6"/><stop offset="0.6" stop-color="#aedffb"/><stop offset="1" stop-color="#8fcaf8"/></linearGradient></defs><path d="M2.0 4.6 Q3.4 1.2 7.6 0.35 Q11.8 0.3 13.4 4.3 L10.5 6.8 Q9.6 3.6 7.0 3.2 Q4.4 3.0 2.0 4.6Z" fill="url(#rg5)" stroke="#2d84e4" stroke-width="0.4"/><path d="M13.0 4.8 L15.7 2.1 L15.7 8.6 L8.6 8.6 L10.6 6.6Z" fill="url(#rh6)" stroke="#3b86dc" stroke-width="0.9" stroke-linejoin="round"/><g transform="rotate(180 7.95 7.9)"><path d="M2.0 4.6 Q3.4 1.2 7.6 0.35 Q11.8 0.3 13.4 4.3 L10.5 6.8 Q9.6 3.6 7.0 3.2 Q4.4 3.0 2.0 4.6Z" fill="url(#rg5)" stroke="#2d84e4" stroke-width="0.4"/><path d="M13.0 4.8 L15.7 2.1 L15.7 8.6 L8.6 8.6 L10.6 6.6Z" fill="url(#rh6)" stroke="#3b86dc" stroke-width="0.9" stroke-linejoin="round"/></g></svg></div>
<div style="left:59.4px;top:778.7px;width:17px;height:17px"><svg width="17" height="17" viewBox="0 0 17 17"><defs><linearGradient id="pl14" x1="0" y1="0" x2="1" y2="1"><stop offset="0" stop-color="#92e665"/><stop offset="0.5" stop-color="#74d743"/><stop offset="1" stop-color="#5cc832"/></linearGradient></defs><path d="M5.3 0.8H10.9V5.3H15.4V10.9H10.9V15.4H5.3V10.9H0.8V5.3H5.3Z" fill="url(#pl14)" stroke="#3aa52a" stroke-width="1" stroke-linejoin="round"/><path d="M6.5 2H8V6.5H2" fill="none" stroke="#b5f08f" stroke-width="0.9" opacity=".8"/></svg></div>
<div class="t" style="left:102.4px;top:779.33px;font-size:13.2px;line-height:16px;color:#14186c">New free text</div>
<div style="left:212.6px;top:778.4px;width:17px;height:17px"><svg width="17" height="17" viewBox="0 0 17 17"><defs></defs><path d="M3 3.2L12.4 14" stroke="#ea9a8c" stroke-width="4" stroke-linecap="round" fill="none"/><path d="M12.4 2.4Q8 7 3.4 14" stroke="#ec9c8e" stroke-width="4.2" stroke-linecap="round" fill="none"/><path d="M4.4 12.6L2.8 14.6" stroke="#ec9c8e" stroke-width="5" stroke-linecap="round" fill="none"/><path d="M3.4 3L7.4 7.6L11.8 2.6" fill="none" stroke="#f4b6aa" stroke-width="1.1" stroke-linecap="round" opacity=".8"/></svg></div>
<div class="t" style="left:238px;top:779.33px;font-size:13.2px;line-height:16px;color:#7f8cba">Delete</div>
<div class="t" style="left:312.5px;top:779.33px;font-size:13.2px;line-height:16px;color:#14186c">Add services</div>
<div class="" style="left:397px;top:774px;width:1px;height:27px;background:#a9c0e4;"></div>
<div class="" style="left:398px;top:774px;width:1px;height:27px;background:#f4f8fd;"></div>
<div class="" style="left:401px;top:775px;width:120px;height:24px;box-sizing:border-box;border:1px solid #c9a560;border-radius:2px;background:linear-gradient(#fffaf0 0,#fff2d4 8%,#ffeab8 64%,#ffd56a 70%,#ffdc80 100%);"></div>
<div style="left:405.7px;top:778.5px;width:16px;height:17px"><svg width="16" height="17" viewBox="0 0 16 17"><defs><linearGradient id="sh15" x1="0" y1="0" x2="1" y2="0"><stop offset="0" stop-color="#f6df86"/><stop offset="0.4" stop-color="#fffbe0"/><stop offset="1" stop-color="#fff6b8"/></linearGradient><linearGradient id="sh16" x1="0" y1="0" x2="1" y2="1"><stop offset="0" stop-color="#f8e27a"/><stop offset="0.45" stop-color="#f2c832"/><stop offset="1" stop-color="#d9a214"/></linearGradient></defs><path d="M0.6 0.9Q6.6 1.6 13.4 0.6Q13.6 9.5 6.9 16Q0.8 10 0.6 0.9Z" fill="url(#sh16)" stroke="#d9b344" stroke-width="0.8"/><path d="M1.2 1.5Q4 1.8 6.2 1.6L6.9 15Q1.6 9.6 1.2 1.5Z" fill="url(#sh15)"/><path d="M7.6 3.2L12.4 2.4M7.6 5.7L12 4.9M7.6 8.2L11 7.4" stroke="#fff1a0" stroke-width="1" opacity=".9"/></svg></div>
<div class="t" style="left:426.3px;top:779.33px;font-size:13.2px;line-height:16px;color:#12124e">Account assign.</div>
<div class="t" style="left:528.8px;top:779.33px;font-size:13.2px;line-height:16px;color:#14186c">Import/Export</div>
<svg style="left:617px;top:785.5px" width="8" height="5" viewBox="0 0 8 5"><path d="M0 0H8L4 4.6Z" fill="#4a5b9c"/></svg>
<div style="left:638.6px;top:782px;width:17px;height:12px"><svg width="17" height="12" viewBox="0 0 17 12"><defs></defs><path d="M0.4 3.2L5.8 0.6L9.2 1.4L12.6 3L16 6.6L15.4 9.6L12.6 10.4L10.4 8.6L9 10.8L6 11L3.8 8.2Z" fill="#6e6e6e"/><path d="M1 3.4L5.8 1.2L8.8 2L5.2 4.6Z" fill="#a5a5a5"/><circle cx="7" cy="8" r="2.3" fill="#b4dffa" stroke="#8a8a8a" stroke-width="0.7"/><circle cx="13" cy="7" r="2.3" fill="#b4dffa" stroke="#8a8a8a" stroke-width="0.7"/><circle cx="6.5" cy="7.5" r="0.9" fill="#eaf7ff"/><circle cx="12.5" cy="6.5" r="0.9" fill="#eaf7ff"/></svg></div>
<div style="left:669.3px;top:779px;width:21px;height:17px"><svg width="21" height="17" viewBox="0 0 21 17"><defs></defs><text x="0.6" y="7" font-family="Liberation Serif" font-weight="bold" font-size="9.6" fill="#3c3c3c" stroke="#3c3c3c" stroke-width="0.35" textLength="19.3" lengthAdjust="spacingAndGlyphs">01.01.</text><text x="2.8" y="15.6" font-family="Liberation Serif" font-weight="bold" font-size="9.6" fill="#4a4a4a" stroke="#4a4a4a" stroke-width="0.35" textLength="15.8" lengthAdjust="spacingAndGlyphs">0010</text></svg></div>
<div style="left:699.4px;top:780.8px;width:14px;height:15px"><svg width="14" height="15" viewBox="0 0 14 15"><defs><linearGradient id="ar17" x1="0" y1="0" x2="1" y2="0"><stop offset="0" stop-color="#8fc0f2"/><stop offset="0.45" stop-color="#6fabeb"/><stop offset="1" stop-color="#8cbdf0"/></linearGradient></defs><path d="M3.6 0.4H10.4V7.2H13.6L7 14.6L0.4 7.2H3.6Z" fill="url(#ar17)" stroke="#5b9de6" stroke-width="0.8" stroke-linejoin="round"/></svg></div>
<div style="left:728.5px;top:778.9px;width:14px;height:15px"><svg width="14" height="15" viewBox="0 0 14 15"><defs><linearGradient id="ar18" x1="0" y1="0" x2="1" y2="0"><stop offset="0" stop-color="#8fc0f2"/><stop offset="0.45" stop-color="#6fabeb"/><stop offset="1" stop-color="#8cbdf0"/></linearGradient></defs><path d="M3.6 0.4H10.4V7.2H13.6L7 14.6L0.4 7.2H3.6Z" transform="rotate(180 7 7.5)" fill="url(#ar18)" stroke="#5b9de6" stroke-width="0.8" stroke-linejoin="round"/></svg></div>
<div style="left:758.3px;top:778.6px;width:17px;height:17px"><svg width="17" height="17" viewBox="0 0 17 17"><defs><linearGradient id="vg19" x1="0" y1="0" x2="1" y2="1"><stop offset="0" stop-color="#b8342c"/><stop offset="0.3" stop-color="#ee5a1a"/><stop offset="0.6" stop-color="#fb8a22"/><stop offset="1" stop-color="#ffa41c"/></linearGradient><radialGradient id="vr20" cx="0.5" cy="0.5" r="0.5"><stop offset="0" stop-color="#ffd00e"/><stop offset="1" stop-color="#ffb414" stop-opacity="0"/></radialGradient></defs><path d="M0.8 0.4L5.3 4.6L7 2.4L12.7 7.3L15.8 6.2L16.2 15.9L6.4 14.7L6.7 12.6L7.9 11.1L6.7 9.3L4.7 11.1L3.8 9.3L1.1 2.8Z" fill="url(#vg19)" stroke="#ee5a18" stroke-width="0.7" stroke-linejoin="round"/><circle cx="12.6" cy="12.4" r="3.6" fill="url(#vr20)"/></svg></div>
<div class="t" style="left:785px;top:779.33px;font-size:13.2px;line-height:16px;color:#14186c">Verification log</div>
<div class="" style="left:24px;top:807px;width:1000px;height:1px;background:#c7c5c3;"></div>
<div class="" style="left:24px;top:808px;width:1px;height:130px;background:#bfbfbf;"></div>
<div class="" style="left:247px;top:808px;width:1px;height:130px;background:#c4c4c4;"></div>
<div class="" style="left:248px;top:808px;width:7px;height:130px;background:linear-gradient(90deg,#e1ecfb,#c4daf8);"></div>
<div class="" style="left:255px;top:807px;width:2px;height:130px;background:#c7c5c3;"></div>
<div class="" style="left:255px;top:807px;width:760px;height:2px;background:#c7c5c3;"></div>
<div style="left:29px;top:815px;width:12px;height:12px"><svg width="12" height="12" viewBox="0 0 12 12"><defs><linearGradient id="mn21" x1="0" y1="0" x2="1" y2="1"><stop offset="0" stop-color="#ffffff"/><stop offset="0.5" stop-color="#eef2f6"/><stop offset="1" stop-color="#c3cfdc"/></linearGradient></defs><rect x="0.5" y="0.5" width="11" height="11" fill="url(#mn21)" stroke="#8b9bb2" stroke-width="1"/><rect x="3" y="5" width="6" height="2" fill="#7f8ea6"/></svg></div>
<div class="" style="left:42px;top:820px;width:1px;height:1px;background:#6a6a6a;"></div>
<div class="" style="left:44px;top:820px;width:1px;height:1px;background:#6a6a6a;"></div>
<div style="left:46.8px;top:812.8px;width:18px;height:15px;filter:drop-shadow(0 0.4px 0.5px rgba(50,50,200,.6))"><svg width="18" height="15" viewBox="0 0 18 15"><defs><linearGradient id="fb22" x1="0" y1="0" x2="1" y2="0.3"><stop offset="0" stop-color="#6a8cfa"/><stop offset="0.6" stop-color="#5a7cf2"/><stop offset="1" stop-color="#3446cc"/></linearGradient></defs><path d="M0.8 12.8V2.4Q0.8 0.5 2.6 0.5H7Q8.4 0.5 9 1.6L9.6 2.4H14.4Q17.4 3 17.4 7V11Q17.4 14.4 14.4 14.4H2.4Q0.8 14.4 0.8 12.8Z" fill="#2929b6" stroke="#1a1a9c" stroke-width="0.9" stroke-linejoin="round"/><path d="M2 2.6Q2 1.5 3 1.5H6.8Q7.6 1.5 8 2.2L8.7 3.4H14.2Q15.6 3.7 16.1 5.2H4.4L2 9.6Z" fill="#5a5adc"/><path d="M1.7 12.9L4.5 6.1H16.3L14.2 12.9Z" fill="url(#fb22)"/><path d="M4.8 6.5H16" stroke="#8aa4fb" stroke-width="0.7" opacity=".8"/></svg></div>
<div class="t" style="left:69.5px;top:813.13px;font-size:13.2px;line-height:16px;color:#1c1c1c">Tile Works Basement area</div>
<div class="" style="left:56px;top:835px;width:1px;height:64px;border-left:1px dotted #9c9c9c;"></div>
<div class="" style="left:57px;top:846px;width:11px;height:1px;border-top:1px dotted #9c9c9c;"></div>
<div class="" style="left:57px;top:873px;width:11px;height:1px;border-top:1px dotted #9c9c9c;"></div>
<div class="" style="left:57px;top:899px;width:11px;height:1px;border-top:1px dotted #9c9c9c;"></div>
<div class="" style="left:88px;top:836px;width:32px;height:23px;box-sizing:border-box;border:1px solid #c6daf5;background:linear-gradient(#c1d6f3,#b7cff0);"></div>
<div style="left:68.7px;top:839.7px;width:18px;height:15px"><svg width="18" height="15" viewBox="0 0 18 15"><defs><linearGradient id="fo24" x1="0" y1="0" x2="0" y2="1"><stop offset="0" stop-color="#fb7a7a"/><stop offset="0.5" stop-color="#f64444"/><stop offset="1" stop-color="#f01818"/></linearGradient></defs><path d="M0.8 12.6V2.8Q0.8 0.6 3 0.6H6.6Q8.2 0.6 8.8 2.2H14.2Q16.2 2.2 16.2 4.2V5.4H4Z" fill="#f01616" stroke="#e80c0c" stroke-width="0.8" stroke-linejoin="round"/><path d="M0.8 13.2L3.6 5.6H17.4L14.8 13.2Q14.4 14.2 13.2 14.2H1.8Q0.5 14.2 0.8 13.2Z" fill="url(#fo24)" stroke="#ee0e0e" stroke-width="1" stroke-linejoin="round"/><path d="M3 3.2Q3 2 4.4 2H6.2" fill="none" stroke="#ff7a7a" stroke-width="0.9"/><path d="M9.6 6.6L7 11.6H10.6" fill="none" stroke="#0a0a0a" stroke-width="1.4"/></svg></div>
<div class="t" style="left:91.5px;top:839.93px;font-size:13.2px;line-height:16px;color:#111">Lot1</div>
<div style="left:68.6px;top:865.7px;width:18px;height:16px"><svg width="18" height="16" viewBox="0 0 18 16"><defs><linearGradient id="fr23" x1="0" y1="0" x2="0" y2="1"><stop offset="0" stop-color="#fb8a8a"/><stop offset="0.5" stop-color="#f75a5a"/><stop offset="1" stop-color="#f22a2a"/></linearGradient></defs><path d="M0.8 13.6V2.8Q0.8 0.6 3 0.6H6.4Q8 0.6 8.6 2.4H15Q17.2 2.4 17.2 4.6V13.6Q17.2 15.2 15.6 15.2H2.4Q0.8 15.2 0.8 13.6Z" fill="#f01616" stroke="#e80c0c" stroke-width="0.8"/><rect x="2.6" y="5.2" width="13" height="8.6" rx="0.8" fill="url(#fr23)"/><path d="M3 3.4Q3 2 4.4 2H6.2" fill="none" stroke="#ff7a7a" stroke-width="0.9"/><path d="M7.4 6.2V12.2H10.8" fill="none" stroke="#0a0a0a" stroke-width="1.5"/></svg></div>
<div class="t" style="left:91.5px;top:866.13px;font-size:13.2px;line-height:16px;color:#1c1c1c">Lot2</div>
<div style="left:68.6px;top:891.7px;width:18px;height:16px"><svg width="18" height="16" viewBox="0 0 18 16"><defs><linearGradient id="fr23" x1="0" y1="0" x2="0" y2="1"><stop offset="0" stop-color="#fb8a8a"/><stop offset="0.5" stop-color="#f75a5a"/><stop offset="1" stop-color="#f22a2a"/></linearGradient></defs><path d="M0.8 13.6V2.8Q0.8 0.6 3 0.6H6.4Q8 0.6 8.6 2.4H15Q17.2 2.4 17.2 4.6V13.6Q17.2 15.2 15.6 15.2H2.4Q0.8 15.2 0.8 13.6Z" fill="#f01616" stroke="#e80c0c" stroke-width="0.8"/><rect x="2.6" y="5.2" width="13" height="8.6" rx="0.8" fill="url(#fr23)"/><path d="M3 3.4Q3 2 4.4 2H6.2" fill="none" stroke="#ff7a7a" stroke-width="0.9"/><path d="M7.4 6.2V12.2H10.8" fill="none" stroke="#0a0a0a" stroke-width="1.5"/></svg></div>
<div class="t" style="left:91.5px;top:892.13px;font-size:13.2px;line-height:16px;color:#1c1c1c">Lot3</div>
<div class="" style="left:257px;top:809px;width:760px;height:130px;background:#fff;"></div>
<div class="" style="left:257px;top:809px;width:1px;height:130px;background:#6c91c9;"></div>
<div class="" style="left:258px;top:831px;width:1px;height:100px;background:#cfdcf0;"></div>
<div class="" style="left:257px;top:809px;width:2px;height:22px;background:#5f87c2;"></div>
<div class="" style="left:259px;top:809px;width:756px;height:1px;background:#6f92c6;"></div>
<div class="" style="left:259px;top:810px;width:756px;height:21px;background:linear-gradient(#dce7f6 0,#d6e3f4 40%,#c9d9f0 70%,#c5d6ee 100%);"></div>
<div class="" style="left:373px;top:810px;width:1px;height:21px;background:#6f93cc;"></div>
<div class="" style="left:374px;top:810px;width:1px;height:21px;background:#e6eefa;"></div>
<div class="" style="left:461px;top:810px;width:1px;height:21px;background:#6f93cc;"></div>
<div class="" style="left:462px;top:810px;width:1px;height:21px;background:#e6eefa;"></div>
<div class="" style="left:565px;top:810px;width:1px;height:21px;background:#6f93cc;"></div>
<div class="" style="left:566px;top:810px;width:1px;height:21px;background:#e6eefa;"></div>
<div class="" style="left:955px;top:810px;width:1px;height:21px;background:#6f93cc;"></div>
<div class="" style="left:956px;top:810px;width:1px;height:21px;background:#e6eefa;"></div>
<div class="t" style="left:263.7px;top:813.21px;font-size:12.1px;line-height:15px;color:#14186c">Reference no.</div>
<div class="t" style="left:378px;top:813.21px;font-size:12.1px;line-height:15px;color:#14186c">Ext. serv. no.</div>
<div class="t" style="left:466px;top:813.21px;font-size:12.1px;line-height:15px;color:#14186c">Serv./Mat. no.</div>
<div class="t" style="left:570px;top:813.21px;font-size:12.1px;line-height:15px;color:#14186c">Short text</div>
<div class="t" style="left:961px;top:813.21px;font-size:12.1px;line-height:15px;color:#14186c">Long text</div>
<div class="" style="left:258px;top:831px;width:756px;height:21px;background:#e6ebee;"></div>
<div class="" style="left:258px;top:851.5px;width:756px;height:1px;background:#d3dbe7;"></div>
<div class="" style="left:373px;top:831px;width:1px;height:21px;background:#c9d3e4;"></div>
<div class="" style="left:373px;top:875px;width:1px;height:21px;background:#c9d3e4;"></div>
<div class="" style="left:461px;top:831px;width:1px;height:21px;background:#c9d3e4;"></div>
<div class="" style="left:461px;top:875px;width:1px;height:21px;background:#c9d3e4;"></div>
<div class="" style="left:565px;top:831px;width:1px;height:21px;background:#c9d3e4;"></div>
<div class="" style="left:565px;top:875px;width:1px;height:21px;background:#c9d3e4;"></div>
<div class="" style="left:955px;top:831px;width:1px;height:21px;background:#c9d3e4;"></div>
<div class="" style="left:955px;top:875px;width:1px;height:21px;background:#c9d3e4;"></div>
<div class="t" style="left:570px;top:834.21px;font-size:12.1px;line-height:15px;font-weight:bold;color:#2a2a2a">Total sum</div>
<div class="" style="left:258px;top:852.5px;width:756px;height:22.5px;background:linear-gradient(#fddb9c 0,#fdd28a 35%,#fcc672 65%,#fbb650 100%);"></div>
<div class="" style="left:258px;top:874px;width:756px;height:1px;background:#f7982a;"></div>
<div class="t" style="left:263px;top:856.01px;font-size:12.1px;line-height:15px;font-weight:bold;color:#2a2a2a">1</div>
<div class="t" style="left:570px;top:856.01px;font-size:12.1px;line-height:15px;font-weight:bold;color:#2a2a2a">Lot1</div>
<div class="" style="left:258px;top:895.5px;width:756px;height:1px;background:#cfd8e7;"></div>
<div class="t" style="left:264px;top:878.21px;font-size:12.1px;line-height:15px;color:#1c1c2c">1.00.00.0010</div>
<div class="t" style="left:570px;top:878.21px;font-size:12.1px;line-height:15px;color:#1c1c2c">srth</div>
<div class="" style="left:391px;top:763px;width:147px;height:64px;box-sizing:border-box;border:3.3px solid #11a986;filter:drop-shadow(3px 3.5px 1px rgba(0,0,0,.3));"></div>
<div style="left:505.9px;top:787.9px;width:26px;height:32px"><svg width="26" height="32" viewBox="0 0 26 32"><defs></defs><path d="M8.4 18.2V2.4Q8.4 0.3 10.65 0.3Q12.9 0.3 12.9 2.4V8.7Q13.3 8.2 14.7 8.2Q16.6 8.2 16.7 9.7Q17.1 9.3 18.6 9.3Q20.7 9.3 20.8 10.9Q21.2 10.4 22.8 10.4Q24.8 10.6 24.8 12.6V24.6L22.6 31.4H11.9L1.2 20.2Q-0.2 18.4 0.6 17Q1.6 15.8 4.4 16.4Z" fill="#2f1d11" stroke="#070403" stroke-width="1.2" stroke-linejoin="round"/><path d="M9.3 10.4H12.2V15.4H9.3ZM13.6 9.6H16V15.4H13.6ZM17.5 10.6H20V15.4H17.5ZM21.6 11.8H24V15.4H21.6Z" fill="#3d2616"/><path d="M9.4 9.3V2.9Q9.4 1.4 10.65 1.4Q11.9 1.4 11.9 2.9V9.3Z" fill="#1241c6"/><rect x="10.2" y="2" width="0.9" height="1.2" fill="#4f8cf0"/><rect x="9.4" y="9.8" width="2.5" height="1" fill="#3f63c8"/><rect x="13.4" y="9.2" width="2.4" height="1.3" fill="#3a5cc0"/><rect x="9.2" y="15.8" width="15" height="1.4" fill="#a87a4a"/><path d="M2 17.3H24.4V18.9H2Z" fill="#070403"/><path d="M0.7 17.2Q1.6 15.9 4.4 16.4L8.6 18.3V19H1.4Q0.2 18.4 0.7 17.2Z" fill="#070403"/><path d="M2.4 18.9H24.3V20.7H3.4Z" fill="#3a3a3a"/><path d="M3.6 21H24.3V22.3H4.8Z" fill="#b08352"/><path d="M12.9 9V15.4M16.75 10V15.4M20.85 11V15.4" stroke="#070403" stroke-width="1"/><rect x="9.2" y="27.4" width="0.9" height="1.4" fill="#86ee7a"/><rect x="19.2" y="29" width="0.9" height="1.2" fill="#7fc8a0"/></svg></div>
</body></html>
